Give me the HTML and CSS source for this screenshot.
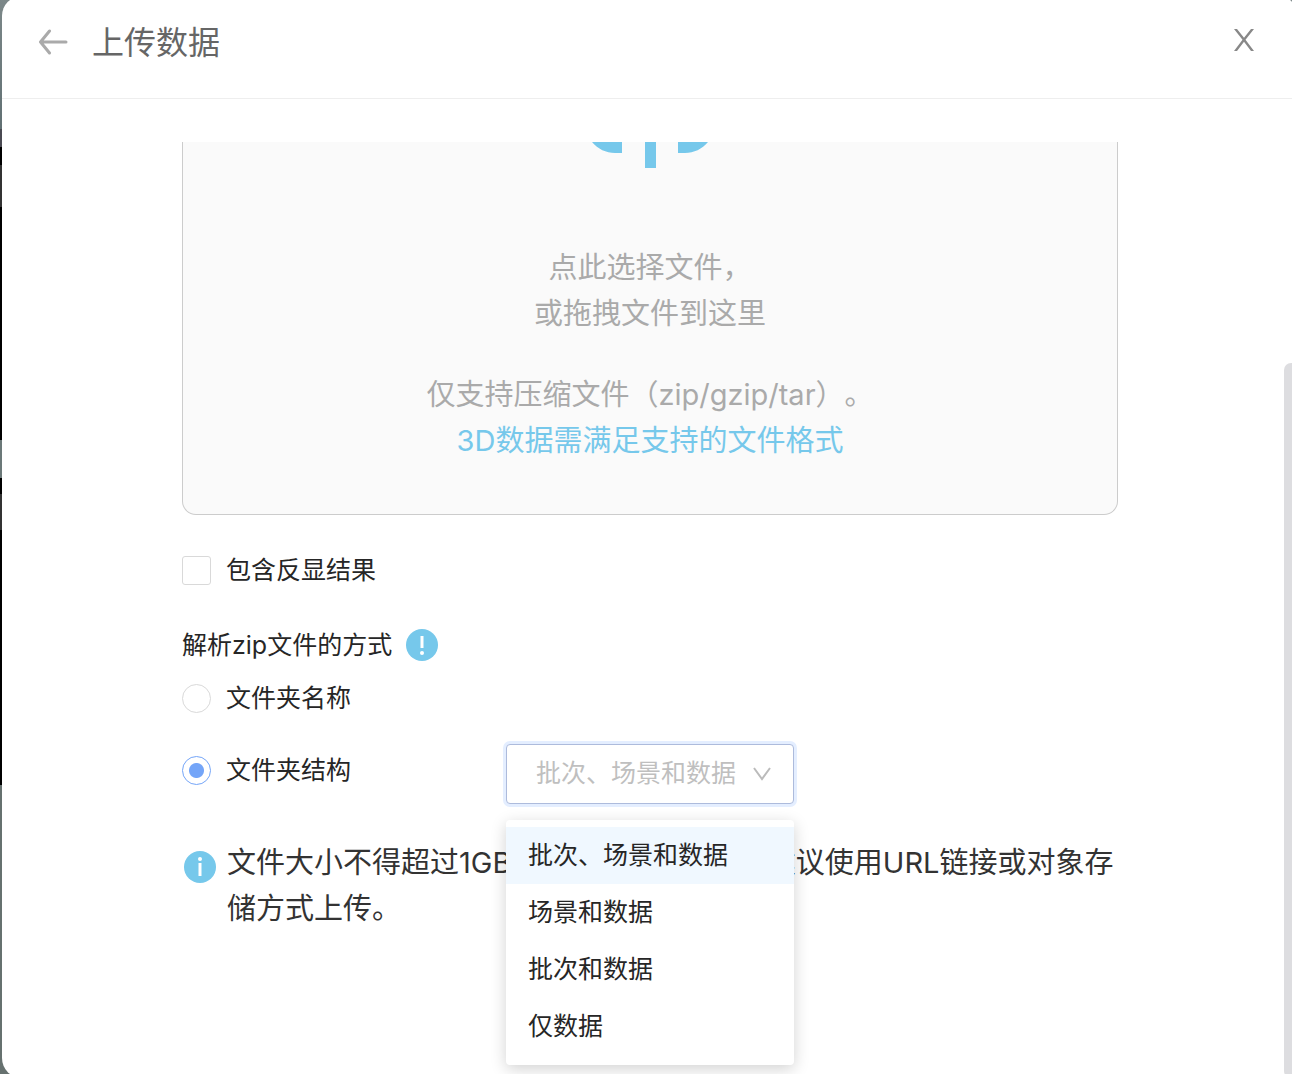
FILE: index.html
```html
<!DOCTYPE html>
<html lang="zh-CN">
<head>
    <meta charset="UTF-8">
    <meta name="viewport" content="width=device-width, initial-scale=1.0">
    <title>上传数据</title>
    <link rel="stylesheet" href="styles.css">
</head>
<body>
    <div class="modal">
        <header class="header">
            <button class="icon-btn" type="button" aria-label="返回">
                <svg width="30" height="30" viewBox="0 -4 30 30" fill="none" stroke="#aaa" stroke-width="3" stroke-linecap="round" stroke-linejoin="round">
                    <path d="M28 13H2.500M11.500 2L2.500 13l9 11"/>
                </svg>
            </button>
            <h1 class="title">上传数据</h1>
            <button class="icon-btn close" type="button" aria-label="关闭">
                <svg width="20" height="22" viewBox="0 0 20 22" fill="#888">
                    <path d="M0 0h3l7 8.800L17 0h3l-8.500 10.800L20 22h-3l-7-9.200L3 22H0l8.500-11.200z"/>
                </svg>
            </button>
        </header>

        <main class="content">
            <div class="upload">
                <svg class="upload-icon" width="116" height="26" viewBox="0 0 116 26" fill="#76c8eb">
                    <path d="M0 0h30v11h-7C14 11 6 7 0 0zM53 0h11v26H53zM86 0h30c-6 7-14 11-23 11h-7z"/>
                </svg>
                <p>点此选择文件，<br>或拖拽文件到这里</p>
                <p>仅支持压缩文件（zip/gzip/tar）。<br><a href="#">3D数据需满足支持的文件格式</a></p>
            </div>

            <label class="option include">
                <input type="checkbox"> 包含反显结果
            </label>

            <h2 class="subtitle">
                解析zip文件的方式
                <svg width="32" height="32" viewBox="0 0 32 32">
                    <circle cx="16" cy="16" r="16" fill="#76c8eb"/>
                    <path d="M14.500 7h3v12h-3z" fill="#fff"/>
                    <circle cx="16" cy="24" r="2" fill="#fff"/>
                </svg>
            </h2>

            <label class="option">
                <input type="radio" name="mode"> 文件夹名称
            </label>

            <div class="structure">
                <label class="option">
                    <input type="radio" name="mode" checked> 文件夹结构
                </label>
                <div class="dropdown">
                    <select class="select" aria-label="文件夹结构">
                        <option>批次、场景和数据</option>
                        <option>场景和数据</option>
                        <option>批次和数据</option>
                        <option>仅数据</option>
                    </select>
                    <svg class="chevron" width="18" height="14" viewBox="0 0 18 14" fill="none" stroke="#bbb" stroke-width="2">
                        <path d="M1 1l8 11 8-11"/>
                    </svg>
                    <ul class="menu" role="listbox" aria-label="文件夹结构">
                        <li class="active" role="option" aria-selected="true">批次、场景和数据</li>
                        <li role="option">场景和数据</li>
                        <li role="option">批次和数据</li>
                        <li role="option">仅数据</li>
                    </ul>
                </div>
            </div>

            <div class="note">
                <svg width="32" height="32" viewBox="0 0 32 32">
                    <circle cx="16" cy="16" r="16" fill="#76c8eb"/>
                    <circle cx="16" cy="8" r="2" fill="#fff"/>
                    <path d="M14.500 12h3v13h-3z" fill="#fff"/>
                </svg>
                <p>文件大小不得超过1GB，如果大于1GB，则建议使用URL链接或对象存储方式上传。</p>
            </div>
        </main>
        <div class="scrollbar"></div>
    </div>
</body>
</html>
```
FILE: styles.css
```css
* {
    box-sizing: border-box;
}
body {
    margin: 0;
    padding-left: 2px;
    height: 100vh;
    overflow: hidden;
    font-family: Inter, "Noto Sans CJK SC", sans-serif;
    font-size: 25px;
    text-spacing-trim: space-all;
    color: #262626;
    background: linear-gradient(#7c8889, #617073 129px, #4a4a52 129px, #4a4a52 147px, #000 147px, #000 165px, #333 165px, #333 207px, #000 207px, #000 440px, #6b7878 440px, #6b7878 478px, #000 478px, #000 494px, #333 494px, #333 530px, #000 530px, #000 785px, #66716f 785px);
}
h1, h2, p, ul {
    margin: 0;
    padding: 0;
    font-weight: 400;
}
.modal {
    position: relative;
    height: calc(100vh + 8px);
    margin: -4px -6px 0 0;
    padding-top: 4px;
    background: #fff;
    border-radius: 20px;
}

/* header */
.header {
    display: flex;
    align-items: center;
    gap: 24px;
    height: 99px;
    padding: 0 44px 18px 36px;
    border-bottom: 1px solid #eee;
}
.icon-btn {
    display: flex;
    padding: 0;
    border: none;
    background: none;
    cursor: pointer;
}
.title {
    font-size: 32px;
    color: #666;
}
.close {
    margin-left: auto;
}

.content {
    max-width: 936px;
    margin: 0 auto;
    padding-top: 43px;
}

/* upload area */
.upload {
    display: flex;
    flex-direction: column;
    align-items: center;
    gap: 35px;
    padding-bottom: 50px;
    border: 1px solid #ccc;
    border-top: none;
    border-radius: 0 0 14px 14px;
    background: #fafafa;
    font-size: 29px;
    line-height: 46px;
    text-align: center;
    color: #aaa;
}
.upload-icon {
    margin-bottom: 42px;
}
.upload a {
    color: #76c8eb;
    text-decoration: none;
}

/* options */
.option {
    display: flex;
    align-items: center;
    gap: 15px;
    line-height: 46px;
}
.option input {
    appearance: none;
    width: 29px;
    height: 29px;
    margin: 0;
    border: 1px solid #d9d9d9;
    border-radius: 3px;
    background: #fff;
}
.option input[type="radio"] {
    border-radius: 50%;
}
.option input[type="radio"]:checked {
    border-color: #74a5f8;
    background: radial-gradient(circle, #74a5f8 7px, #fff 8px);
}
.include {
    margin-top: 32px;
}
.subtitle {
    display: flex;
    align-items: center;
    gap: 14px;
    margin: 29px 0 7px;
    font-size: 25px;
    line-height: 46px;
}
.structure {
    display: grid;
    grid-template-columns: 324px 288px;
    margin-top: 23px;
}
.structure .option {
    height: 52px;
}

/* select */
.dropdown {
    position: relative;
}
.select {
    appearance: none;
    display: block;
    width: 100%;
    height: 60px;
    padding: 0 50px 2px 29px;
    border: 1px solid #adbbdc;
    border-radius: 4px;
    box-shadow: 0 0 0 3px #e4eeff;
    background: #fff;
    font: inherit;
    color: #bfbfbf;
}
.chevron {
    position: absolute;
    right: 23px;
    top: 23px;
}
.menu {
    position: absolute;
    top: 76px;
    left: 0;
    right: 0;
    z-index: 1;
    padding: 7px 0 10px;
    border-radius: 4px;
    background: #fff;
    box-shadow: 0 4px 16px rgba(0, 0, 0, 0.18);
    list-style: none;
}
.menu li {
    padding: 0 22px;
    line-height: 57px;
    cursor: pointer;
}
.menu .active {
    background: #f0f8ff;
}

/* note */
.note {
    display: flex;
    align-items: flex-start;
    gap: 11px;
    margin-top: 36px;
    padding-left: 2px;
    font-size: 29px;
    line-height: 46px;
    color: #333;
}
.note svg {
    flex: none;
    margin-top: 11px;
}

.scrollbar {
    position: absolute;
    top: 367px;
    right: 0;
    bottom: 0;
    width: 14px;
    border-radius: 7px;
    background: #dddde0;
}
```
